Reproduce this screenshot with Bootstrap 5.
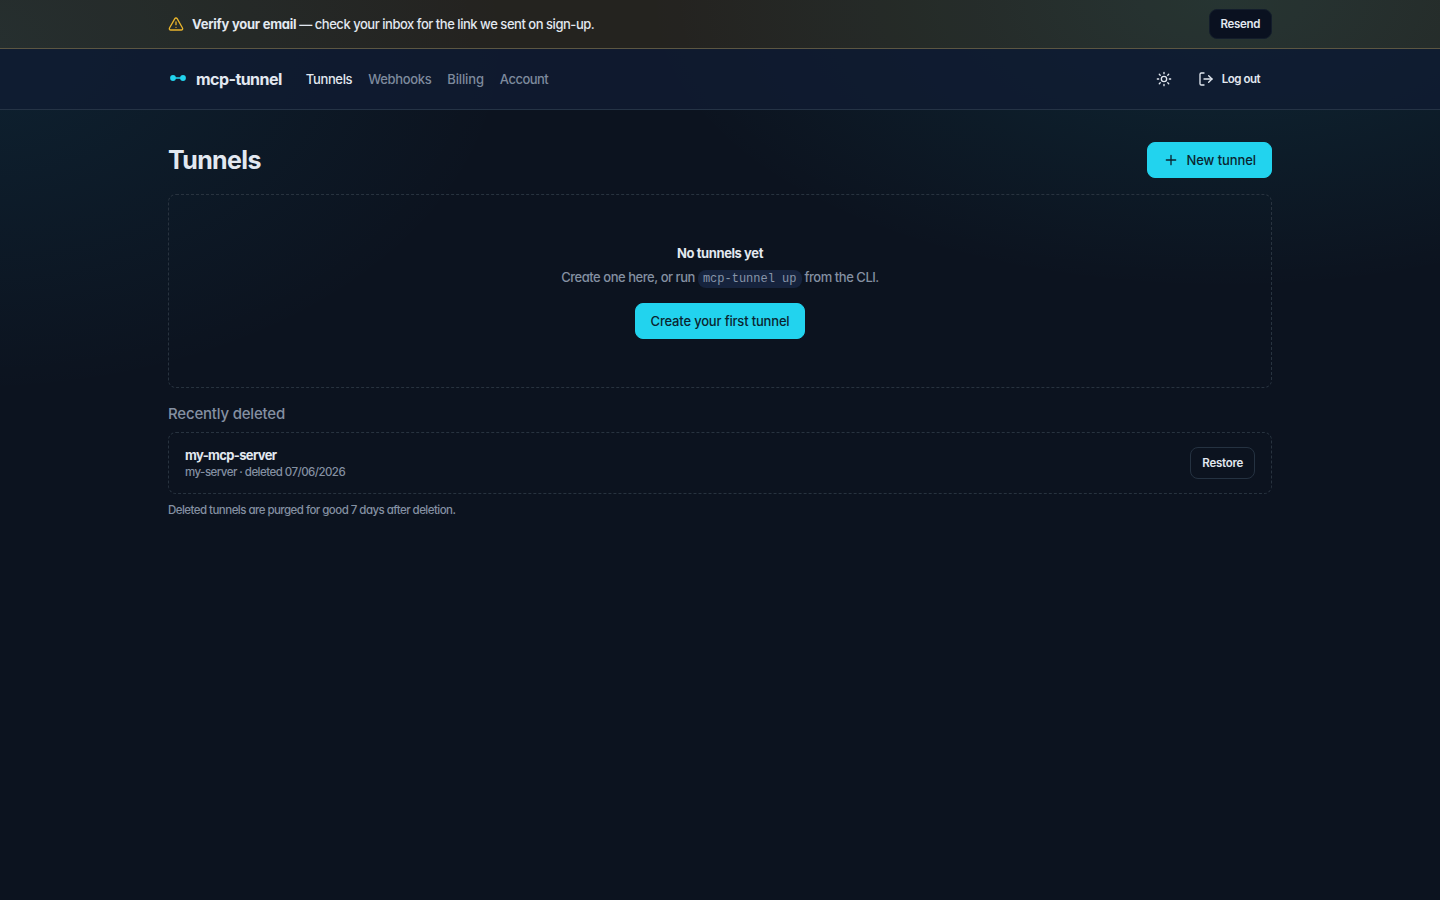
<!DOCTYPE html>
<html lang="en">
<head>
<meta charset="utf-8">
<meta name="viewport" content="width=device-width, initial-scale=1">
<title>Tunnels · mcp-tunnel</title>
<link href="https://cdn.jsdelivr.net/npm/bootstrap@5.3.0/dist/css/bootstrap.min.css" rel="stylesheet">
<style>
body{font-family:Inter,"Liberation Sans",sans-serif;font-feature-settings:"cv11";font-size:13px;line-height:20px;color:#e2e8f0;min-height:100vh;background:radial-gradient(580px 290px at 85% 0,rgba(34,211,238,.10),transparent 100%),radial-gradient(540px 350px at -2% 5%,rgba(34,190,238,.085),transparent 100%),#0c131f}
.shell{width:1104px}
.verify-bar{height:49px;background:rgba(251,175,36,.1);border-bottom:1px solid #5c5642}
.verify-text{font-weight:500;letter-spacing:-.47px}
.verify-text b{letter-spacing:-.25px}
.top-nav{height:61px;padding:0;background:rgba(16,28,50,.8);border-bottom:1px solid #253345}
.brand-name{font-size:16px;font-weight:700;letter-spacing:-.55px}
.top-nav .nav-link{padding:0;color:#7e8a9d;font-weight:500;letter-spacing:-.36px}
.top-nav .nav-link.active{color:#e2e8f0;letter-spacing:-.33px}
.top-nav .nav-link.billing-link{letter-spacing:-.14px}
.top-nav .nav-link.account-link{letter-spacing:-.52px}
.top-actions{gap:14px}
.btn{font-size:13px;font-weight:500;line-height:20px;border-radius:8px;padding:7px 15px;letter-spacing:-.18px}
.btn-accent,.btn-accent:hover{background:#22d3ee;color:#0a2530;border-color:#22d3ee}
.btn-add{letter-spacing:-.08px}
.btn-small{font-size:11.5px;font-weight:600;padding:5px 11px;color:#e2e8f0;letter-spacing:-.4px}
.btn-small:hover{color:#fff}
.btn-dark-fill{background:#0a1120;padding:4px 11px;letter-spacing:-.35px;border-color:#131d2b}
.btn-line{border-color:#253241;letter-spacing:-.26px}
.btn-exit{letter-spacing:-.5px}
.page-main{padding-top:32px}
h1{font-size:25px;font-weight:700;line-height:35px;letter-spacing:-.62px}
.dashed{border:1px dashed #28333f;border-radius:8px}
.empty-box{height:194px;padding-top:48px}
.empty-title{letter-spacing:-.41px}
.empty-copy{font-weight:500;letter-spacing:-.46px}
.dim{color:#8490a2}
.chip{font-family:"Liberation Mono",monospace;font-size:12px;font-weight:400;line-height:16px;letter-spacing:0;color:#8794a8;background:#16233d;border-radius:8px;padding:2px 5px}
.sub-title{font-size:15px;line-height:20px;letter-spacing:-.2px}
.row-box{height:62px}
.item-name{letter-spacing:-.66px;line-height:18px}
.tiny{font-size:11.5px;font-weight:500;line-height:17px;letter-spacing:-.54px}
</style>
</head>
<body>
<div class="verify-bar d-flex align-items-center">
  <div class="shell mx-auto d-flex align-items-center justify-content-between">
    <div class="d-flex align-items-center gap-2">
      <svg width="16" height="16" viewBox="0 0 24 24" fill="none" stroke="#e8b42c" stroke-width="2" stroke-linecap="round" stroke-linejoin="round"><path d="m21.73 18-8-14a2 2 0 0 0-3.48 0l-8 14A2 2 0 0 0 4 21h16a2 2 0 0 0 1.73-3"/><path d="M12 9v4"/><path d="M12 17h.01"/></svg>
      <span class="verify-text"><b>Verify your email</b> — check your inbox for the link we sent on sign-up.</span>
    </div>
    <button class="btn btn-small btn-dark-fill">Resend</button>
  </div>
</div>
<header class="top-nav navbar">
  <div class="shell mx-auto d-flex align-items-center">
    <a href="#" class="d-flex align-items-center gap-2 text-reset text-decoration-none">
      <svg width="20" height="20" viewBox="0 0 20 20"><path d="M5 9h10" stroke="#22d3ee" stroke-width="2" opacity=".75"/><circle cx="5" cy="9" r="2.9" fill="#22d3ee"/><circle cx="15" cy="9" r="2.9" fill="#22d3ee"/></svg>
      <span class="brand-name">mcp-tunnel</span>
    </a>
    <nav class="nav gap-3 ms-4">
      <a class="nav-link active" href="#">Tunnels</a>
      <a class="nav-link" href="#">Webhooks</a>
      <a class="nav-link billing-link" href="#">Billing</a>
      <a class="nav-link account-link" href="#">Account</a>
    </nav>
    <div class="top-actions ms-auto d-flex align-items-center">
      <svg width="16" height="16" viewBox="0 0 24 24" fill="none" stroke="#e2e8f0" stroke-width="2" stroke-linecap="round" stroke-linejoin="round"><circle cx="12" cy="12" r="4"/><path d="M12 2v2M12 20v2M4.93 4.93l1.41 1.41M17.66 17.66l1.41 1.41M2 12h2M20 12h2M6.34 17.66l-1.41 1.41M19.07 4.93l-1.41 1.41"/></svg>
      <button class="btn btn-small btn-exit d-flex align-items-center">
        <svg class="me-2" width="16" height="16" viewBox="0 0 24 24" fill="none" stroke="currentColor" stroke-width="2" stroke-linecap="round" stroke-linejoin="round"><path d="M9 21H5a2 2 0 0 1-2-2V5a2 2 0 0 1 2-2h4"/><path d="m16 17 5-5-5-5"/><path d="M21 12H9"/></svg>
        <span>Log out</span>
      </button>
    </div>
  </div>
</header>
<main class="page-main shell mx-auto">
  <div class="d-flex align-items-center justify-content-between mb-3">
    <h1 class="mb-0">Tunnels</h1>
    <button class="btn btn-accent btn-add d-flex align-items-center gap-2">
      <svg width="16" height="16" viewBox="0 0 24 24" fill="none" stroke="currentColor" stroke-width="2" stroke-linecap="round"><path d="M5 12h14M12 5v14"/></svg><span>New tunnel</span>
    </button>
  </div>
  <section class="dashed empty-box text-center">
    <div class="fw-bold empty-title">No tunnels yet</div>
    <p class="dim empty-copy mb-3 mt-1">Create one here, or run <code class="chip">mcp-tunnel up</code> from the CLI.</p>
    <button class="btn btn-accent">Create your first tunnel</button>
  </section>
  <h2 class="dim sub-title mt-3 mb-2">Recently deleted</h2>
  <section class="dashed row-box d-flex align-items-center justify-content-between px-3">
    <div><div class="fw-bold item-name">my-mcp-server</div><div class="dim tiny">my-server · deleted 07/06/2026</div></div>
    <button class="btn btn-small btn-line">Restore</button>
  </section>
  <p class="dim tiny mt-2 mb-0">Deleted tunnels are purged for good 7 days after deletion.</p>
</main>
<script src="https://cdn.jsdelivr.net/npm/bootstrap@5.3.0/dist/js/bootstrap.bundle.min.js"></script>
</body>
</html>
